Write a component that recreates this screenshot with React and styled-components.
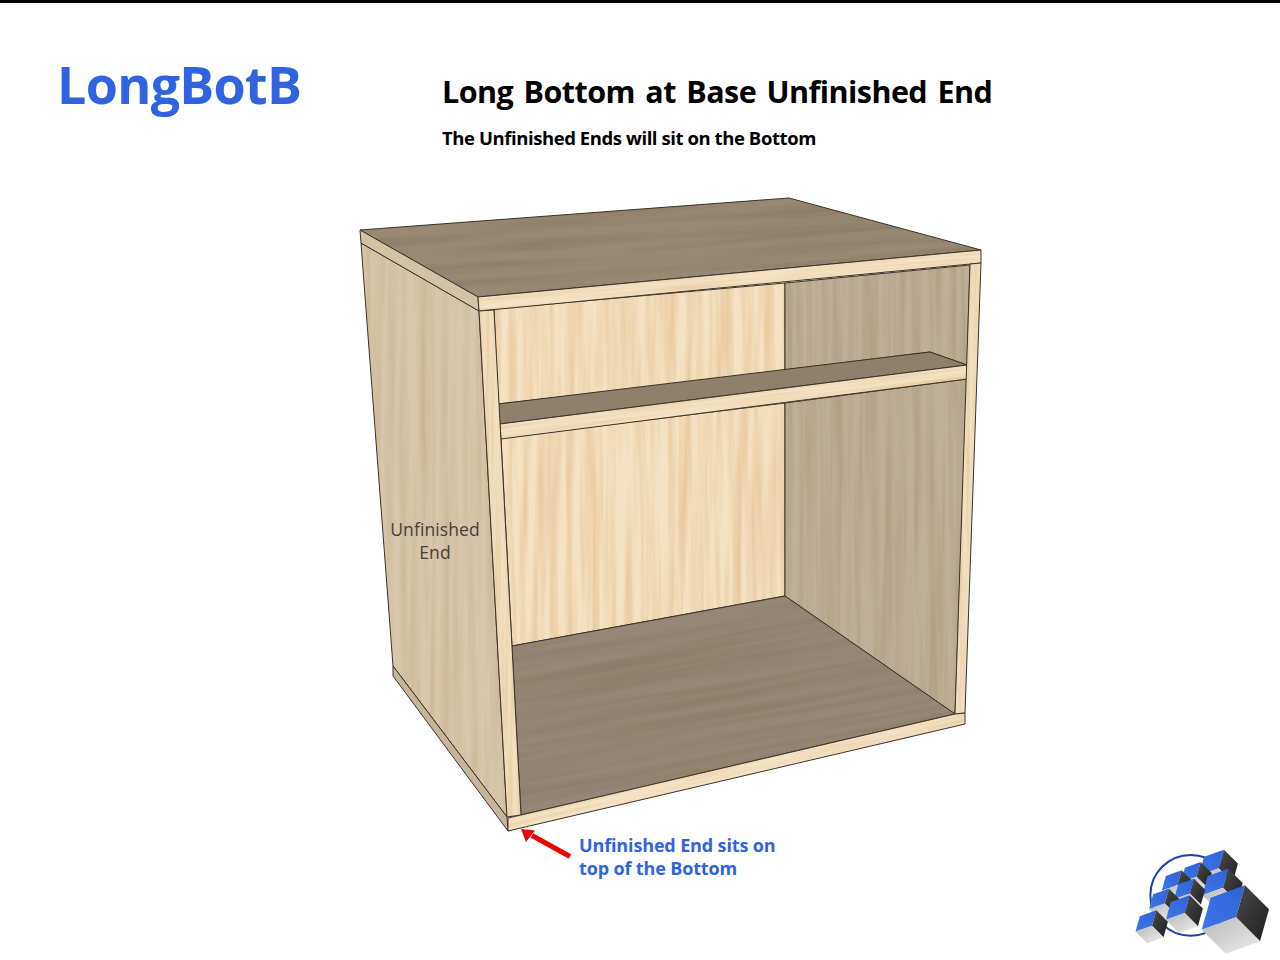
import React from 'react';
import styled, { createGlobalStyle } from 'styled-components';

const blue = '#2f63df';
const ink = '#3b3328';

const GlobalStyle = createGlobalStyle`
  html, body {
    margin: 0;
    padding: 0;
    background: #fff;
  }
`;

const Page = styled.div`
  width: 1280px;
  height: 960px;
  box-sizing: border-box;
  border-top: 3px solid #000;
  overflow: hidden;
  display: flex;
  flex-direction: column;
  font-family: "Open Sans", "Noto Sans", sans-serif;
`;

const Header = styled.header`
  height: 187px;
  display: flex;
  align-items: flex-start;
`;

const Code = styled.h1`
  width: 442px;
  margin: 48px 0 0;
  padding-left: 57px;
  box-sizing: border-box;
  color: ${blue};
  font-size: 52px;
  line-height: 66px;
  font-weight: 700;
  letter-spacing: -0.7px;
`;

const Titles = styled.div`
  padding-top: 68px;
`;

const Title = styled.h2`
  margin: 0;
  color: #000;
  font-size: 30.5px;
  line-height: 40px;
  font-weight: 700;
  letter-spacing: -0.55px;
  word-spacing: 3px;
  white-space: nowrap;
`;

const Subtitle = styled.p`
  margin: 15px 0 0;
  color: #000;
  font-size: 18.5px;
  line-height: 24px;
  font-weight: 700;
  letter-spacing: -0.42px;
  white-space: nowrap;
`;

const Drawing = styled.div`
  position: relative;
  margin-left: 350px;
  width: 640px;
  height: 642px;
`;

const Cabinet = styled.svg`
  display: block;
  width: 640px;
  height: 642px;
`;

const SideLabel = styled.div`
  position: absolute;
  left: 30px;
  top: 328px;
  width: 110px;
  text-align: center;
  color: #45403a;
  font-size: 17.5px;
  line-height: 23px;
  letter-spacing: 0.1px;
`;

const Footer = styled.footer`
  flex: 1;
  display: flex;
  align-items: flex-start;
  padding-left: 520px;
  padding-right: 9px;
`;

const Arrow = styled.svg`
  display: block;
  flex: none;
  width: 52px;
  height: 30px;
  margin: -3px 7px 0 0;
`;

const Callout = styled.p`
  margin: 2px 0 0;
  color: ${blue};
  font-size: 18px;
  line-height: 23px;
  font-weight: 700;
  letter-spacing: -0.14px;
  white-space: nowrap;
`;

const Logo = styled.svg`
  display: block;
  flex: none;
  width: 142px;
  height: 108px;
  margin: 15px 0 0 auto;
`;

const panels = [
  // inside of the box
  { id: 'backUp', pts: '494,309 785,283 785,372 498,404', base: '#f5e2c4', grain: 'gLight' },
  { id: 'backLow', pts: '501,438 785,403 785,596 512,646', base: '#f5e2c4', grain: 'gLight' },
  { id: 'wallUp', pts: '785,283 970,265 967,365 930,352 785,370', base: '#bfaf96', grain: 'gWall' },
  { id: 'wallLow', pts: '785,403 967,379 955,714 785,596', base: '#bfaf96', grain: 'gWall' },
  { id: 'floor', pts: '512,646 785,596 955,714 521,815', base: '#958775', grain: 'gDark', turn: -10 },
  // shelf
  { id: 'shelfTop', pts: '498,404 930,352 967,365 500,424', base: '#8f806c' },
  { id: 'shelfFront', pts: '500,424 967,365 967,379 501,439', base: '#f5e2c5', grain: 'gEdge', turn: -7 },
  // outer shell
  { id: 'side', pts: '361,243 479,311 507,817 393,666', base: '#d8c7ac', grain: 'gSide' },
  { id: 'sideBand', pts: '393,666 507,817 508,831 393,676', base: '#c6b59a' },
  { id: 'top', pts: '360,230 789,198 981,250 478,297', base: '#988974', grain: 'gDark', turn: -4 },
  { id: 'topBand', pts: '360,230 478,297 479,311 361,243', base: '#d3c2a4' },
  { id: 'topFront', pts: '478,297 981,250 981,263 479,311', base: '#f5e2c5', grain: 'gEdge', turn: -5 },
  { id: 'stileL', pts: '479,311 494,310 521,815 507,817', base: '#f2dfc0', grain: 'gEdgeV' },
  { id: 'stileR', pts: '970,264 981,263 965,713 955,714', base: '#f2dfc0', grain: 'gEdgeV' },
  { id: 'bottomFront', pts: '508,818 955,714 965,713 965,724 508,831', base: '#f5e2c5', grain: 'gEdge', turn: -13 },
];

const grains = [
  { id: 'gLight', freq: '0.12 0.005', seed: 4, color: '0.88 0.72 0.52', gain: 1.3, lift: -0.45 },
  { id: 'gWall', freq: '0.14 0.004', seed: 9, color: '0.62 0.54 0.42', gain: 0.9, lift: -0.32 },
  { id: 'gSide', freq: '0.14 0.004', seed: 12, color: '0.76 0.65 0.5', gain: 0.9, lift: -0.3 },
  { id: 'gDark', freq: '0.004 0.12', seed: 7, color: '0.5 0.43 0.33', gain: 0.9, lift: -0.32 },
  { id: 'gEdge', freq: '0.008 0.3', seed: 3, color: '0.87 0.74 0.55', gain: 1, lift: -0.36 },
  { id: 'gEdgeV', freq: '0.3 0.008', seed: 5, color: '0.87 0.74 0.55', gain: 1, lift: -0.36 },
];

const Grain = ({ id, freq, seed, color, gain, lift }) => {
  const [r, g, b] = color.split(' ');
  return (
    <filter id={id} x="0" y="0" width="100%" height="100%" colorInterpolationFilters="sRGB">
      <feTurbulence type="fractalNoise" baseFrequency={freq} numOctaves="3" seed={seed} />
      <feColorMatrix
        values={`0 0 0 0 ${r}  0 0 0 0 ${g}  0 0 0 0 ${b}  ${gain} 0 0 0 ${lift}`}
      />
    </filter>
  );
};

const Panel = ({ id, pts, base, grain, turn = 0 }) => (
  <g>
    <clipPath id={`clip-${id}`}>
      <polygon points={pts} />
    </clipPath>
    <polygon points={pts} fill={base} />
    {grain && (
      <g clipPath={`url(#clip-${id})`}>
        <rect
          x="250"
          y="100"
          width="840"
          height="840"
          filter={`url(#${grain})`}
          transform={`rotate(${turn} 670 520)`}
        />
      </g>
    )}
    <polygon points={pts} fill="none" stroke={ink} strokeWidth="1" strokeLinejoin="round" />
  </g>
);

// cubes of the logo: q is the corner where blue face meets the dark face
const cubes = [
  { q: [315, 28], s: 0.58 },
  { q: [245, 65], s: 0.46 },
  { q: [188, 90], s: 0.46 },
  { q: [328, 85], s: 0.6 },
  { q: [225, 115], s: 0.46 },
  { q: [150, 145], s: 0.46 },
  { q: [212, 165], s: 0.55 },
  { q: [112, 210], s: 0.48 },
  { q: [378, 135], s: 1 },
];

const Cube = ({ q, s }) => {
  const p = (a, b, c) => `${q[0] + s * (a * 103 - b * 27 + c * 72)},${q[1] + s * (a * -37 + b * 96 + c * 72)}`;
  return (
    <g>
      <polygon points={`${p(-1, 0, 0)} ${p(0, 0, 0)} ${p(0, 1, 0)} ${p(-1, 1, 0)}`} fill="url(#logoBlue)" />
      <polygon points={`${p(0, 0, 0)} ${p(0, 0, 1)} ${p(0, 1, 1)} ${p(0, 1, 0)}`} fill="url(#logoDark)" />
      <polygon points={`${p(-1, 1, 0)} ${p(0, 1, 0)} ${p(0, 1, 1)} ${p(-1, 1, 1)}`} fill="url(#logoGrey)" />
    </g>
  );
};

export default function App() {
  return (
    <Page>
      <GlobalStyle />
      <Header>
        <Code>LongBotB</Code>
        <Titles>
          <Title>Long Bottom at Base Unfinished End</Title>
          <Subtitle>The Unfinished Ends will sit on the Bottom</Subtitle>
        </Titles>
      </Header>
      <Drawing>
        <Cabinet viewBox="350 190 640 642">
          <defs>
            {grains.map((g) => (
              <Grain key={g.id} {...g} />
            ))}
          </defs>
          {panels.map((p) => (
            <Panel key={p.id} {...p} />
          ))}
        </Cabinet>
        <SideLabel>
          Unfinished
          <br />
          End
        </SideLabel>
      </Drawing>
      <Footer>
        <Arrow viewBox="0 0 52 30">
          <path d="M50 27.5 L12 6.5" stroke="#f00000" strokeWidth="5" fill="none" />
          <polygon points="1,0 15,1.5 6,13" fill="#f00000" />
        </Arrow>
        <Callout>
          Unfinished End sits on
          <br />
          top of the Bottom
        </Callout>
        <Logo viewBox="30 20 426 324">
          <defs>
            <linearGradient id="logoBlue" x1="0" y1="1" x2="1" y2="0">
              <stop offset="0" stopColor="#3c78e6" />
              <stop offset="1" stopColor="#2f62d8" />
            </linearGradient>
            <linearGradient id="logoDark" x1="0" y1="0" x2="1" y2="1">
              <stop offset="0" stopColor="#4a4a4a" />
              <stop offset="1" stopColor="#1f1f1f" />
            </linearGradient>
            <linearGradient id="logoGrey" x1="0" y1="0" x2="1" y2="1">
              <stop offset="0" stopColor="#b9b9b9" />
              <stop offset="1" stopColor="#ececec" />
            </linearGradient>
          </defs>
          <circle cx="215" cy="165" r="121" fill="none" stroke="#1d3fa8" strokeWidth="6" />
          {cubes.map((c, i) => (
            <Cube key={i} {...c} />
          ))}
        </Logo>
      </Footer>
    </Page>
  );
}
